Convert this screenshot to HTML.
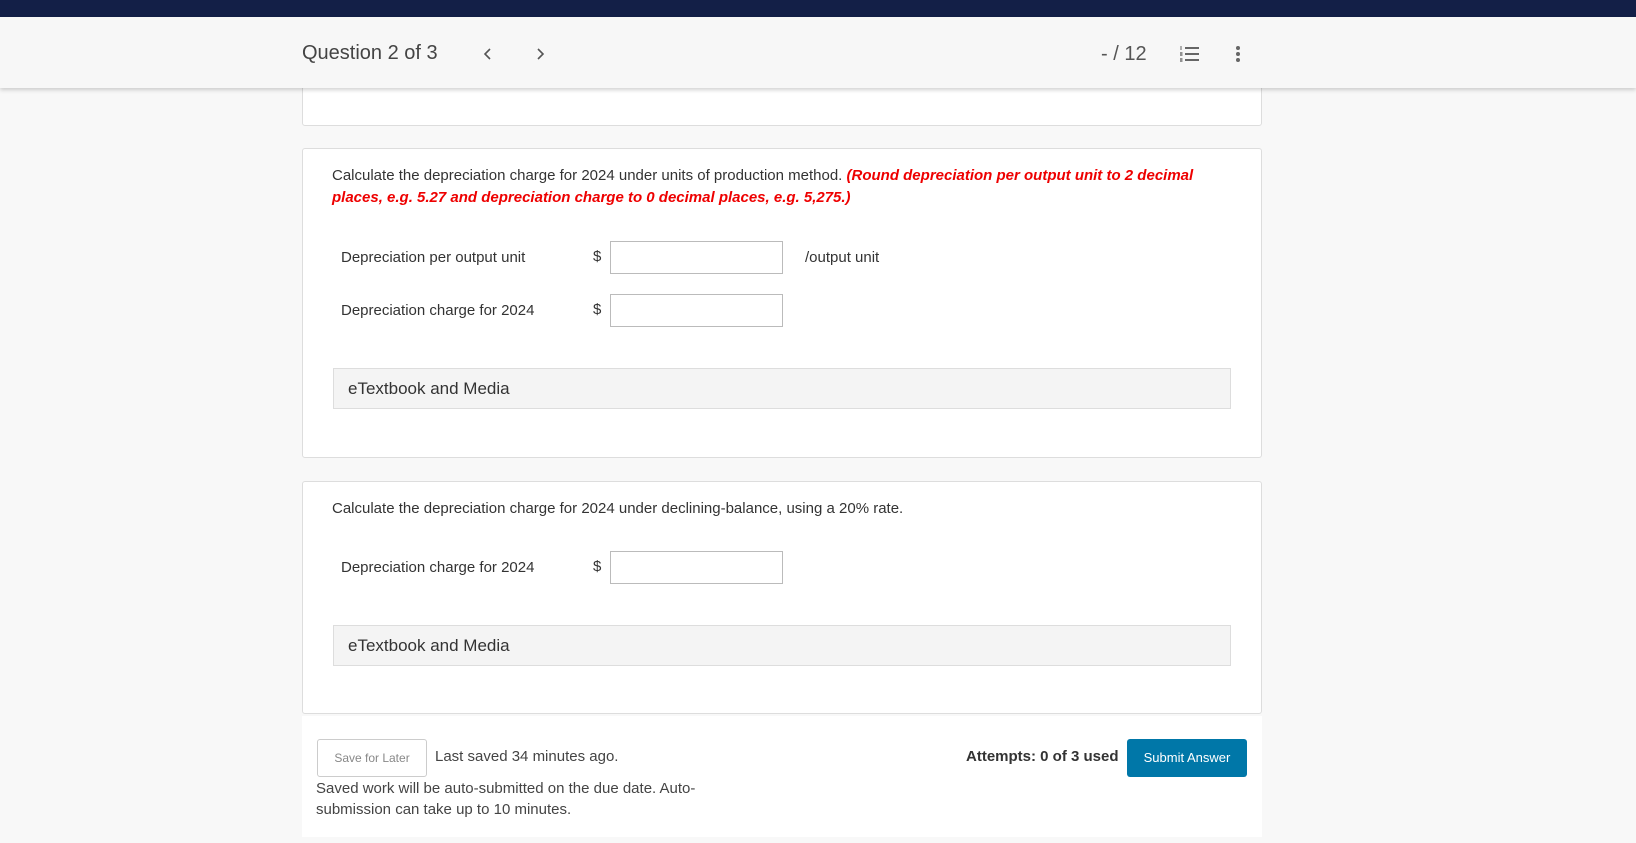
<!DOCTYPE html>
<html><head><style>
*{margin:0;padding:0;box-sizing:border-box}
body{width:1636px;height:843px;background:#f8f8f8;font-family:"Liberation Sans",sans-serif;color:#333;position:relative;overflow:hidden}
.abs{position:absolute}
.top{left:0;top:0;width:1636px;height:17px;background:#131f47}
.hdr{left:0;top:17px;width:1636px;height:71px;background:#f7f7f7;box-shadow:0 2px 4px rgba(0,0,0,.18);z-index:2}
.card{background:#fff;border:1px solid #ddd;border-radius:3px;left:302px;width:960px}
.t{font-size:15px;white-space:nowrap}
.inp{background:#fff;border:1px solid #bbb;width:173px;height:33px}
.etb{left:333px;width:898px;height:41px;background:#f4f4f4;border:1px solid #ddd;font-size:17px;padding:10px 14px;color:#333}
</style></head><body>
<div class="abs top"></div>
<div class="abs hdr">
 <div class="abs" style="left:302px;top:25px;font-size:20px;color:#444">Question 2 of 3</div>
 <svg class="abs" style="left:482px;top:29px" width="12" height="16"><path d="M8 3L3 8L8 13" stroke="#555" stroke-width="1.6" fill="none"/></svg>
 <svg class="abs" style="left:534px;top:29px" width="12" height="16"><path d="M4 3L9 8L4 13" stroke="#555" stroke-width="1.6" fill="none"/></svg>
 <div class="abs" style="left:1101px;top:26px;font-size:20px;color:#555">- / 12</div>
 <svg class="abs" style="left:1179px;top:27px" width="22" height="20"><g fill="#666"><rect x="6" y="3" width="14" height="2"/><rect x="6" y="9" width="14" height="2"/><rect x="6" y="15" width="14" height="2"/><rect x="1.5" y="2" width="1" height="4"/><rect x="1" y="8" width="2.5" height="4" opacity=".7"/><rect x="1" y="14" width="2.5" height="4" opacity=".7"/></g></svg>
 <svg class="abs" style="left:1234px;top:27px" width="8" height="22"><g fill="#666"><circle cx="4" cy="4" r="2"/><circle cx="4" cy="10" r="2"/><circle cx="4" cy="16" r="2"/></g></svg>
</div>
<div class="abs card" style="top:60px;height:66px"></div>
<div class="abs card" style="top:148px;height:310px"></div>
<div class="abs t" style="left:332px;top:167px">Calculate the depreciation charge for 2024 under units of production method. <i style="color:#e00;font-weight:bold">(Round depreciation per output unit to 2 decimal</i></div>
<div class="abs t" style="left:332px;top:189px;color:#e00;font-weight:bold;font-style:italic">places, e.g. 5.27 and depreciation charge to 0 decimal places, e.g. 5,275.)</div>
<div class="abs t" style="left:341px;top:249px">Depreciation per output unit</div>
<div class="abs t" style="left:593px;top:248px">$</div>
<div class="abs inp" style="left:610px;top:241px"></div>
<div class="abs t" style="left:805px;top:249px">/output unit</div>
<div class="abs t" style="left:341px;top:302px">Depreciation charge for 2024</div>
<div class="abs t" style="left:593px;top:301px">$</div>
<div class="abs inp" style="left:610px;top:294px"></div>
<div class="abs etb" style="top:368px">eTextbook and Media</div>
<div class="abs card" style="top:481px;height:233px"></div>
<div class="abs t" style="left:332px;top:500px">Calculate the depreciation charge for 2024 under declining-balance, using a 20% rate.</div>
<div class="abs t" style="left:341px;top:559px">Depreciation charge for 2024</div>
<div class="abs t" style="left:593px;top:558px">$</div>
<div class="abs inp" style="left:610px;top:551px"></div>
<div class="abs etb" style="top:625px">eTextbook and Media</div>
<div class="abs" style="left:302px;top:716px;width:960px;height:121px;background:#fff"></div>
<div class="abs" style="left:317px;top:739px;width:110px;height:38px;border:1px solid #ccc;border-radius:3px;font-size:12px;color:#888;text-align:center;line-height:36px;background:#fff">Save for Later</div>
<div class="abs t" style="left:435px;top:748px;color:#444">Last saved 34 minutes ago.</div>
<div class="abs t" style="left:316px;top:780px;color:#444">Saved work will be auto-submitted on the due date. Auto-</div>
<div class="abs t" style="left:316px;top:801px;color:#444">submission can take up to 10 minutes.</div>
<div class="abs t" style="left:966px;top:748px;font-weight:bold;color:#333">Attempts: 0 of 3 used</div>
<div class="abs" style="left:1127px;top:739px;width:120px;height:38px;background:#0077a8;border-radius:3px;color:#fff;font-size:13px;text-align:center;line-height:38px">Submit Answer</div>
</body></html>
